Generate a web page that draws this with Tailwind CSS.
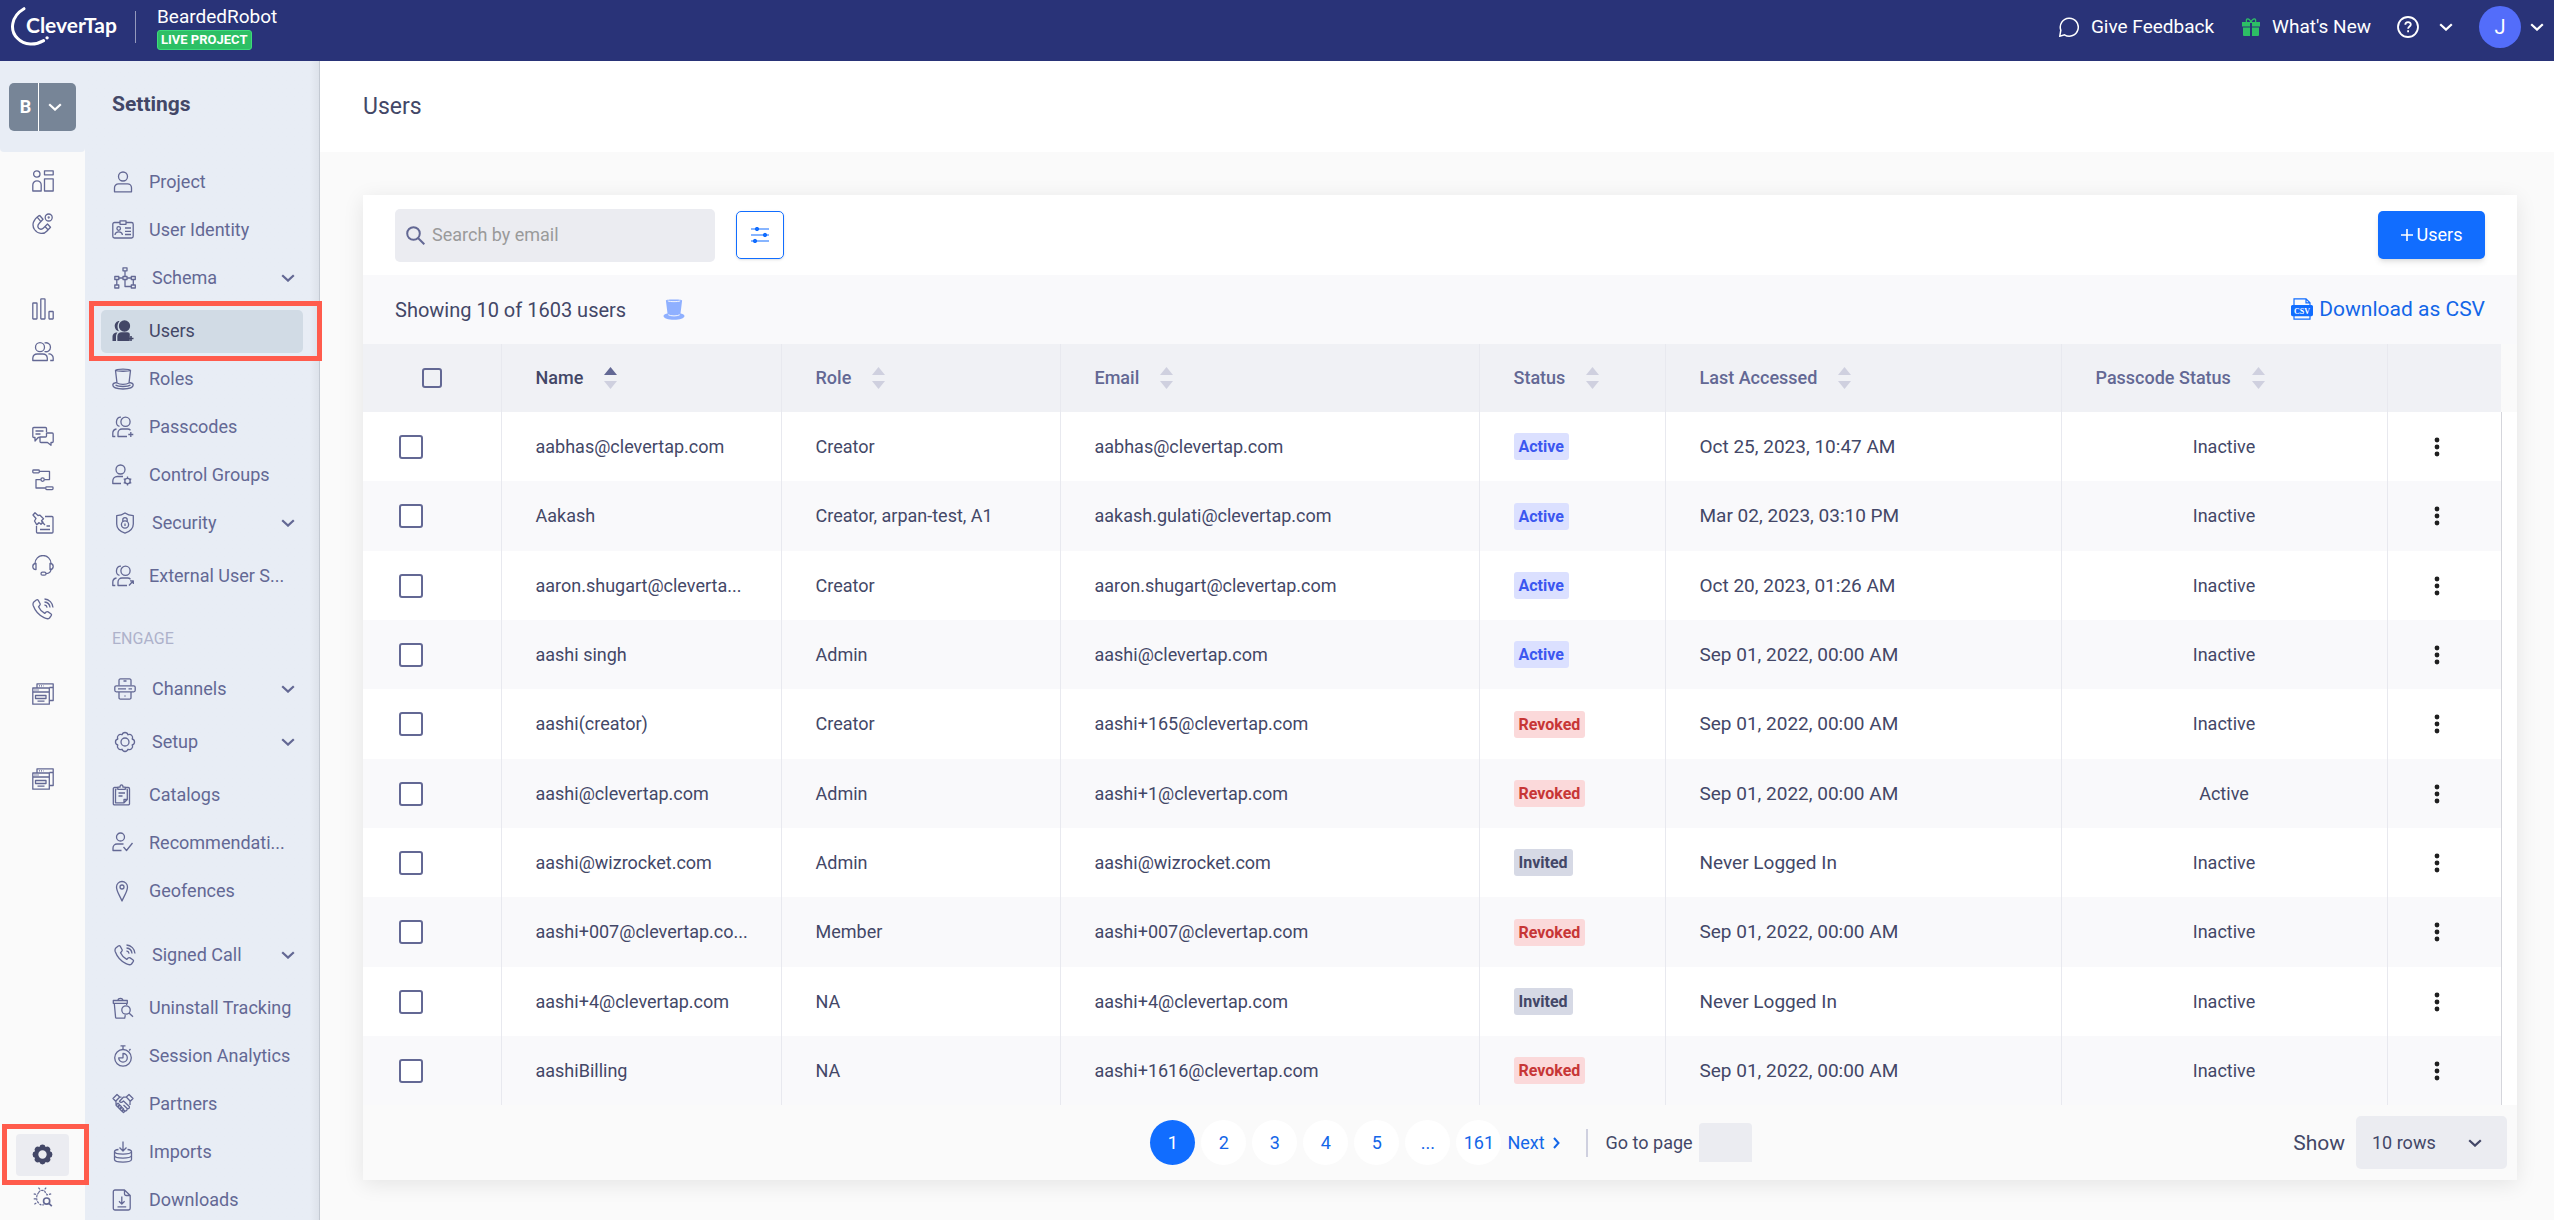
<!DOCTYPE html>
<html lang="en">
<head>
<meta charset="utf-8">
<meta name="viewport" content="width=device-width, initial-scale=1">
<title>Users - Settings</title>
<script src="https://cdn.jsdelivr.net/npm/@tailwindcss/browser@4"></script>
</head>
<body class="flex h-screen flex-col overflow-hidden bg-[#fafafa] font-['Roboto',sans-serif] text-lg leading-6 text-[#434767]">

<svg class="hidden" aria-hidden="true">
  <symbol id="dash" viewBox="0 0 22 22"><circle cx="4.8" cy="4" r="3.2"/><path d="M.8 21v-6a4.2 4.2 0 0 1 8.4 0v6z"/><rect x="12.5" y=".8" width="8.7" height="4"/><rect x="12.5" y="8.8" width="8.7" height="12.2"/></symbol>
  <symbol id="magnet" viewBox="0 0 22 22"><circle cx="16.7" cy="4.5" r="3.5"/><circle cx="16.7" cy="4.5" r=".5"/><path d="M7.5 2.2C1 6.500-.5 12 2.500 16.500 6 21.500 12 21.500 15 18l3.500-3.800-3-3.200-4 4c-1.500 1.500-3.500 1.700-4.800.3-1.300-1.500-1-3.300.6-5L11 6.200 7.500 2.200M5.200 4.200l3.300 4M13 13.500l3 3.200"/></symbol>
  <symbol id="bars" viewBox="0 0 22 22"><rect x=".8" y="5" width="4.200" height="16" rx=".5"/><rect x="8.800" y=".8" width="4.200" height="20.200" rx=".5"/><rect x="17" y="13.500" width="4.200" height="7.500" rx=".5"/></symbol>
  <symbol id="people" viewBox="0 0 22 22"><circle cx="8" cy="6.200" r="4.500"/><path d="M12.500 2a4.500 4.500 0 1 1 0 8.500M.8 19.500v-2.500a4.500 4.500 0 0 1 4.500-4h5.500a4.500 4.500 0 0 1 4.500 4v2.500zM16.500 13a4 4 0 0 1 4.700 4v2.500h-3"/></symbol>
  <symbol id="chat" viewBox="0 0 22 22"><path d="M14.500 6V2.500a1 1 0 0 0-1-1h-11.700a1 1 0 0 0-1 1v8a1 1 0 0 0 1 1H3v3.500l3.200-3.500H8M3.500 5h8M3.500 8h5"/><path d="M14.500 7h5.700a1 1 0 0 1 1 1v7.500a1 1 0 0 1-1 1H19v2.800l-3.500-2.800H9a1 1 0 0 1-1-1V11h5.500a1 1 0 0 0 1-1z"/></symbol>
  <symbol id="journey" viewBox="0 0 22 22"><rect x=".8" y="1" width="6.500" height="2.800" rx=".8"/><path d="M7.300 2.400H17.500v8.200h-5M8.800 10.600H4V19h9.500"/><circle cx="10.600" cy="10.600" r="1.700"/><rect x="13.800" y="17.800" width="7.200" height="2.800" rx=".8"/></symbol>
  <symbol id="pinnote" viewBox="0 0 22 22"><path d="M13 4.500h7a1 1 0 0 1 1 1V20a1 1 0 0 1-1 1H5.500a1 1 0 0 1-1-1v-6M8 17.500h10M14.500 14H18M1 3l2-2.200L6 3.500 8 3.200l3.500 3.600-2 2 1.500 1.500-2 2-1.700-1.500-2.500 2L2.500 9 4 6.500zM9.500 9.500l3.500 3.500M7 10.500l-2 2"/></symbol>
  <symbol id="headset" viewBox="0 0 22 22"><path d="M3 8.500a8 8 0 0 1 16 0M19 14c0 3-2 4.500-5 4.700"/><path d="M4 8.500v6c-2 0-3.200-1.200-3.200-3s1.200-3 3.200-3zM18 8.500v6c2 0 3.200-1.200 3.200-3s-1.200-3-3.200-3z"/><rect x="9" y="17.200" width="5" height="3" rx="1.500"/></symbol>
  <symbol id="phone" viewBox="0 0 22 22"><path d="M1.800 4l2.500-2c.8-.5 1.500-.4 2 .4L8 5.500c.4.800.3 1.400-.4 2L6.500 8.800c1.200 2.600 3.500 5.200 6.200 6.600l1.400-1.300c.6-.5 1.200-.6 2-.2l2.700 1.800c.8.600.9 1.300.4 2L17.500 20c-1 1-3 1-5.500-.3C7.500 17.500 3 12.500 1.300 7.800.7 6 .9 5 1.800 4zM12.500 1a9 9 0 0 1 8.500 8.500M12.500 4a6 6 0 0 1 5.500 5.500M12.500 7a3 3 0 0 1 2.600 2.600"/></symbol>
  <symbol id="windows" viewBox="0 0 22 22"><path d="M5 5V.8H21.200V17.500H17.500M.8 5h16.500v16.200H.8zM.8 9h16.500M17.500 4.500h3.500M3.500 12.500h10.500v3H3.500zM5.500 18.200h7"/><path stroke-dasharray="1 1" d="M2.500 7h4.500M7 2.900h4.500"/></symbol>
  <symbol id="gear" viewBox="0 0 22 22"><path fill-rule="evenodd" d="M18.200 8A3.100 3.100 0 0 1 18.200 14 3.100 3.100 0 0 1 14 18.200 3.100 3.100 0 0 1 8 18.200 3.100 3.100 0 0 1 3.800 14 3.100 3.100 0 0 1 3.800 8 3.100 3.100 0 0 1 8 3.800 3.100 3.100 0 0 1 14 3.800 3.100 3.100 0 0 1 18.200 8zM15 11a4 4 0 1 0-8 0 4 4 0 1 0 8 0z"/></symbol>
  <symbol id="bug" viewBox="0 0 22 22"><path stroke-dasharray="2.500 1" d="M6.500 6C3.500 9 3 14 6 17.500c2 2.300 4 2.500 6 2M6.500 6c0-3 7-3 7 0 1.500 1.200 2 2.500 2.300 4M6 .8l2.500 3M14.500.8l-2.500 3M.8 7.500l4 1M20 7.500l-4 1M.8 13h3M1.500 19l3-2"/><circle cx="15" cy="15.500" r="3.400" stroke-width="1.800"/><path stroke-width="1.800" d="M17.500 18l3.200 3"/></symbol>
  <symbol id="person" viewBox="0 0 22 22"><circle cx="11" cy="5.500" r="4.500"/><path d="M2.500 20.800v-4a4 4 0 0 1 4-4h9a4 4 0 0 1 4 4v4z"/></symbol>
  <symbol id="idcard" viewBox="0 0 22 22"><path d="M8 3.500H2.500a1.700 1.700 0 0 0-1.700 1.700v12.100A1.700 1.700 0 0 0 2.500 19h17a1.700 1.700 0 0 0 1.700-1.700V5.200a1.700 1.700 0 0 0-1.700-1.700H14M8 1.800h6v3.500H8zM3 16c.4-4.200 7-4.200 7.400 0M13 9h6M13 12.300h6M13 15.500h6"/><circle cx="6.700" cy="9.500" r="1.800"/></symbol>
  <symbol id="schema" viewBox="0 0 22 22"><rect x="9" y=".8" width="4" height="3"/><path d="M11 3.800v5.500M4.500 11H9M13 11h4.500M2.800 12.500V18M19.300 12.500V18M11 12.500V19.500h6"/><rect x=".8" y="9.500" width="4" height="3"/><rect x="9" y="9.500" width="4" height="3"/><rect x="17.300" y="9.500" width="4" height="3"/><rect x=".8" y="18" width="4" height="3"/><rect x="17.300" y="18" width="4" height="3"/></symbol>
  <symbol id="userssolid" viewBox="0 0 22 22"><g fill="currentColor"><circle cx="12.500" cy="6" r="5"/><path stroke="none" d="M7.500 1C5 .8 2.700 3 2.700 6s2 5 4.300 5.200C5 8 5 4 7.500 1zM5.500 12.500C2 12.500.5 14.500.5 17v4h3.500v-4c0-1.800.4-3.300 1.500-4.500z"/><path d="M6 20.400v-4.400a3.500 3.500 0 0 1 3.500-3h6c1 0 1.600.3 1.600 1v6.400z"/></g><path stroke-width="1.600" d="M19 16v5M16.500 18.500h5"/></symbol>
  <symbol id="usersplus" viewBox="0 0 22 22"><circle cx="13.500" cy="5.800" r="4.600"/><path d="M9 1.200C3.500 1 3 9.500 7.500 10.300M4.500 13C2 13.500.8 15 .8 17v3.500h2.500M15 20.500H6V17a4 4 0 0 1 4-4h5.500a4 4 0 0 1 3 1.200M18.800 16v5M16.300 18.500h5"/></symbol>
  <symbol id="usersout" viewBox="0 0 22 22"><circle cx="13.500" cy="5.800" r="4.600"/><path d="M9 1.200C3.500 1 3 9.500 7.500 10.300M4.500 13C2 13.500.8 15 .8 17v3.500h2.500M15 20.500H6V17a4 4 0 0 1 4-4h5.500a4 4 0 0 1 3 1.200M17 20.500l4-4.500M18 15.800h3.300V19"/></symbol>
  <symbol id="usergear" viewBox="0 0 22 22"><circle cx="8.500" cy="5.500" r="4.500"/><path d="M9 19.500H.8V17a4.500 4.500 0 0 1 4.500-4.500H11"/><circle cx="15.500" cy="17" r="2.700"/><path d="M15.500 12.500v1.800M15.500 19.700v1.800M11.700 14.800l1.500.8M17.800 18.400l1.500.8M11.700 19.200l1.500-.8M17.800 15.600l1.500-.8"/></symbol>
  <symbol id="hat" viewBox="0 0 22 22"><path d="M3.500 2.500c2 1 13 1 15 0M3.500 2.500C4 .7 18 .7 18.500 2.500L17 15c-3 1.700-9 1.700-12 0zM4.800 14.500c-2.500.3-4 1.100-4 2.500 0 2.200 4 4 10.200 4s10.200-1.800 10.200-4c0-1.400-1.500-2.200-4-2.500M3.500 17c3 2 12 2 15 0"/></symbol>
  <symbol id="shield" viewBox="0 0 22 22"><path d="M11 1c2.500 1.800 5 2.500 8.300 2.700V12c0 4.300-3.500 7.500-8.300 9.200C6.200 19.500 2.700 16.300 2.700 12V3.700C6 3.500 8.500 2.800 11 1z"/><circle cx="11" cy="12.500" r="3.600"/><path d="M8.800 9.500V7.800a2.200 2.200 0 0 1 4.400 0v1.700M11 11.500v2.500"/></symbol>
  <symbol id="channels" viewBox="0 0 22 22"><path d="M5 7.500V2.500A1.500 1.500 0 0 1 6.500.8h9A1.500 1.500 0 0 1 17 2.500v5M5 14v5.500a1.500 1.500 0 0 0 1.500 1.700h9a1.500 1.500 0 0 0 1.500-1.700V14"/><rect x=".8" y="7.800" width="20.400" height="6" rx="1.500"/><path d="M4 10.800h8M14.500 10.800H18M9.500 3h3M10.500 18h1"/></symbol>
  <symbol id="clipboard" viewBox="0 0 22 22"><path d="M6 3.500H2.500A1.200 1.200 0 0 0 1.300 4.700v15a1.200 1.200 0 0 0 1.200 1.200h13.800a1.200 1.200 0 0 0 1.200-1.200v-15a1.200 1.200 0 0 0-1.200-1.200H13M5.800 5.300V3.200H8c0-3 3-3 3 0h2.300v2.100zM4.500 5.500H3.500v13.300h8.500l3.300-3.300v-10H14.500M12 18.800v-3.300h3.300M6.500 9h6.500M6.500 12h4"/></symbol>
  <symbol id="usercheck" viewBox="0 0 22 22"><circle cx="8.500" cy="5" r="4"/><path d="M9.500 18.500H1v-2.500a4 4 0 0 1 4-4h6.500M11.500 15l3 3.500 6-7.500"/></symbol>
  <symbol id="pin" viewBox="0 0 22 22"><path d="M10 21C8 16 4.500 11.500 4.500 7a5.500 5.500 0 0 1 11 0C15.500 11.500 12 16 10 21z"/><circle cx="10" cy="7" r="2"/></symbol>
  <symbol id="trash" viewBox="0 0 22 22"><path d="M1.300 3.500h14v2.800h-14zM6 3.300C6 .8 10.800.8 10.800 3.300M2.300 6.500l1.300 14a.8.800 0 0 0 .8.700h8.300l.6-3M14.700 6.500l-.1 1.500"/><circle cx="14" cy="13" r="4.200"/><path d="M17 16l4 3.800"/></symbol>
  <symbol id="timer" viewBox="0 0 22 22"><circle cx="11" cy="12.800" r="8.300"/><path d="M11 4.200V.8M8.500.8h5M17.200 5.500l1.300-1.500M11 8.500v4.300H6.700a4.300 4.300 0 1 0 4.300-4.300z"/></symbol>
  <symbol id="handshake" viewBox="0 0 22 22"><path d="M1 5.500l4-4 2.700 2.500-4 4.200zM21 5.500l-4-4-2.700 2.500 4 4.200zM7.500 4.200h2M14.300 4.200h-3L7.500 8.300c1 1.500 2.500 1.200 4-.3l5.800 5.500c.5 1.500-.5 2.500-2 2M4 8.200v3.300M18 8v4M4 12l2-1.700 1.500 1.500-2 2zM6 14l2-1.800 1.500 1.600-2 2zM8 16.200l2-1.800 1.500 1.500-2 2zM10 18.200l1.500-1.400 1.500 1.500-1.500 1.300zM15 15.500c.5 1.500-.5 2.500-2 2.500M11.500 12l3.700 3.500"/></symbol>
  <symbol id="imports" viewBox="0 0 22 22"><path d="M11 .5v9M7.500 6.500L11 10l3.500-3.500M6.500 8.500c-2.500.3-4 1-4 2 0 3.500 17 3.500 17 0 0-1-1.500-1.700-4-2M2.500 10.500v8c0 3.500 17 3.500 17 0v-8M2.500 14.500c0 3.500 17 3.500 17 0"/></symbol>
  <symbol id="download" viewBox="0 0 22 22"><path d="M12.500 1H3A1.700 1.700 0 0 0 1.300 2.700v16.600A1.700 1.700 0 0 0 3 21h13.500a1.700 1.700 0 0 0 1.700-1.700V6.500zM12.500 1v3.800a1.700 1.700 0 0 0 1.700 1.700h4M9.800 7.500V15M7 12.300l2.800 2.800 2.800-2.800M5.500 17.800h8.700"/></symbol>
  <symbol id="chev" viewBox="0 0 14 8"><path stroke-width="2.200" d="M1.200 1.200L7 6.600l5.800-5.400"/></symbol>
  <symbol id="dots" viewBox="0 0 6 20"><g fill="#1f1f1f" stroke="none"><circle cx="3" cy="3" r="2.400"/><circle cx="3" cy="10" r="2.400"/><circle cx="3" cy="17" r="2.400"/></g></symbol>
</svg>

<header class="flex h-[61px] shrink-0 items-center bg-[#293378] pb-2 text-[19px] text-white">
  <a href="#" aria-label="CleverTap home" class="relative ml-[11px] flex h-[46px] w-[124px] items-center">
    <svg class="absolute top-[3px] left-0 h-[43px] w-[40px]" viewBox="0 0 42 46" fill="none" stroke="#fff" stroke-linecap="round"><path stroke-width="3.200" d="M13.500 1.800C-.5 10-2 25 6.500 33.500 14 41.500 26 41 34.500 36"/><circle cx="38.200" cy="33" r="1.800" fill="#fff" stroke="none"/></svg>
    <span class="pb-1 pl-[15px] font-['Lato',sans-serif] text-[21px] font-bold">CleverTap</span>
  </a>
  <span class="h-8 w-px bg-white/50"></span>
  <div class="ml-[21px] flex flex-col items-start">
    <span class="leading-[26px]">BeardedRobot</span>
    <span class="rounded-[3px] border border-[#3ddc7b] bg-[#2dbf65] px-[3px] text-[13px] leading-[18px] font-bold">LIVE PROJECT</span>
  </div>
  <nav class="mr-[10px] ml-auto flex items-center" aria-label="Account">
    <a href="#" class="flex items-center gap-3"><svg class="size-5" viewBox="0 0 20 20" fill="none" stroke="#fff" stroke-width="1.500"><path d="M.8 19.200l1-6A9 9 0 1 1 5.500 17.800z"/></svg>Give Feedback</a>
    <a href="#" class="ml-7 flex items-center gap-3"><svg class="size-[18px]" viewBox="0 0 18 18" fill="#2dbf65"><path d="M0 4h18v4.500H0zM1 9.500h7V18H2a1 1 0 0 1-1-1zM10 9.500h7V17a1 1 0 0 1-1 1h-6z"/><path fill="none" stroke="#2dbf65" stroke-width="1.300" d="M9 4C7-.5 3.500 0 4.500 4M9 4c2-4.500 5.500-4 4.500 0"/><path fill="#293378" d="M8 5h2v11H8z"/></svg>What's New</a>
    <button aria-label="Help" class="ml-[26px] flex items-center gap-[20px]"><svg class="size-[22px]" viewBox="0 0 22 22" fill="none" stroke="#fff" stroke-width="1.800"><circle cx="11" cy="11" r="10"/><path d="M8.300 8.800c0-3.600 5.500-3.500 5.500-.3 0 2-2.700 2-2.700 4.200M11.100 14.300v2"/></svg><svg class="h-2 w-[14px]" fill="none" stroke="currentColor"><use href="#chev"/></svg></button>
    <button aria-label="Profile menu" class="ml-[26px] flex items-center gap-[9px]"><span class="flex size-[42px] items-center justify-center rounded-full bg-[#536dfa] text-xl">J</span><svg class="h-2 w-[14px]" fill="none" stroke="currentColor"><use href="#chev"/></svg></button>
  </nav>
</header>

<div class="flex min-h-0 flex-1">
  <nav id="rail" class="flex w-[85px] shrink-0 flex-col items-center text-[#636894]" aria-label="Sections">
    <div class="flex h-[91px] w-full shrink-0 items-center rounded-b bg-[#e8edf5] pl-[9px]">
      <button class="flex h-12 w-[67px] items-center rounded-[5px] bg-[#778597] text-white" aria-label="Switch project"><span class="flex h-full w-[30px] items-center justify-center border-r border-white pl-1 text-lg font-bold">B</span><svg class="ml-[9px] h-2 w-[14px]" fill="none" stroke="currentColor"><use href="#chev"/></svg></button>
    </div>
  </nav>

  <aside class="w-[235px] shrink-0 border-r border-[#c3c9d2] bg-linear-to-l from-[#dde2ea] via-[#e8edf5] via-4% to-[#e8edf5] text-[#636894]">
    <h2 class="flex h-[97px] items-center px-[27px] pb-3 text-[21px] font-bold text-[#434767]">Settings</h2>
    <ul id="menu"></ul>
  </aside>

  <main class="min-w-0 flex-1">
    <h1 class="flex h-[91px] items-center bg-white px-[43px] text-[23px]">Users</h1>
    <section class="mt-[43px] mr-[37px] ml-[43px] bg-white shadow-[0_4px_20px_rgba(0,0,0,0.09)]">
      <div class="flex h-20 items-center px-8">
        <label class="flex h-[53px] w-[320px] items-center gap-[7px] rounded-[5px] bg-[#ebecf1] px-[11px]">
          <svg class="size-[19px] text-[#636894]" viewBox="0 0 19 19" fill="none" stroke="currentColor" stroke-width="2"><circle cx="7.500" cy="7.500" r="6.300"/><path d="M12 12l6.300 6.300"/></svg>
          <input type="search" aria-label="Search by email" placeholder="Search by email" class="min-w-0 flex-1 bg-transparent outline-none placeholder:text-[#9a9a9a]">
        </label>
        <button aria-label="Filters" class="ml-[21px] flex size-12 items-center justify-center rounded-[5px] border border-[#116dff] shadow-sm"><svg class="h-4 w-[18px]" viewBox="0 0 18 16" fill="#116dff" stroke="#116dff"><path stroke-width="1.200" d="M0 2h18M0 8h18M0 14h18"/><circle cx="6" cy="2" r="1.700"/><circle cx="14" cy="8" r="1.700"/><circle cx="4" cy="14" r="1.700"/></svg></button>
        <button class="ml-auto flex h-12 w-[107px] items-center justify-center gap-1 rounded-[5px] bg-[#116dff] text-white shadow-md"><svg class="size-3" viewBox="0 0 12 12" stroke="#fff" stroke-width="1.600"><path d="M6 0v12M0 6h12"/></svg>Users</button>
      </div>
      <div class="flex h-[69px] items-center bg-[#f9f9fb] px-8 text-xl">
        <p>Showing 10 of 1603 users</p>
        <button aria-label="Filter by role" class="ml-[37px]"><svg class="h-[21px] w-[22px]" viewBox="0 0 22 22" fill="#8fb0ff"><path d="M2.500 1.500C3 .3 19 .3 19.500 1.500l-1.700 13.700c1.500.4 4.200 1 4.200 2.500 0 2.500-5 4-11 4s-11-1.500-11-4c0-1.500 2.700-2.100 4.200-2.500z"/><path d="M4.500 2c2 1 11 1 13 0M5 16.500c2.500 1.600 9.500 1.600 12 0" fill="none" stroke="#f9f9fb"/></svg></button>
        <a href="#" class="ml-auto flex items-center gap-[6px] text-[21px] text-[#1366e8]"><svg class="size-[22px]" viewBox="0 0 22 22" fill="none" stroke="#116dff" stroke-width="1.200"><path d="M3 7V.8h12l4 4V7M15 .8v4h4M3 18v3.200h16V18"/><rect x=".6" y="7.600" width="20.800" height="10" rx="1" fill="#116dff"/><text x="11" y="15.500" text-anchor="middle" font-size="8" font-weight="700" font-family="Liberation Serif, serif" fill="#fff" stroke="none">CSV</text></svg>Download as CSV</a>
      </div>
      <div class="bg-linear-to-b from-[#fafafa] from-[68px] to-white to-[68px] pr-4">
      <table class="w-full table-fixed border-collapse text-left">
        <colgroup><col class="w-[138px]"><col class="w-[280px]"><col class="w-[279px]"><col class="w-[419px]"><col class="w-[186px]"><col class="w-[396px]"><col class="w-[326px]"><col class="w-[114px]"></colgroup>
        <thead class="bg-[#f0f1f5] text-[#636894]"><tr id="head" class="h-[68px]"></tr></thead>
        <tbody id="rows"></tbody>
      </table>
      </div>
      <footer class="flex h-[75px] items-center bg-[#fafafa]">
        <div class="flex-1"></div>
        <nav id="pages" class="ml-8 flex items-center gap-[6px] text-[#1366e8]" aria-label="Pagination"></nav>
        <div class="flex flex-1 items-center justify-end pr-[10px]">
          <label for="rowcount" class="mr-[11px] text-[21px]">Show</label>
          <span class="relative flex items-center">
            <select id="rowcount" class="h-[53px] w-[151px] appearance-none rounded-[5px] bg-[#ebecf1] pl-4"><option>10 rows</option></select>
            <svg class="pointer-events-none absolute right-[25px] h-2 w-[14px]" fill="none" stroke="currentColor"><use href="#chev"/></svg>
          </span>
        </div>
      </footer>
    </section>
  </main>
</div>

<script>
const byId = id => document.getElementById(id);
const icon = (name, cls = 'size-[22px]') => `<svg class="${cls} shrink-0" fill="none" stroke="currentColor" stroke-width="1.3" stroke-linejoin="round"><use href="#${name}"/></svg>`;
const chev = '<svg class="ml-auto h-2 w-[14px] shrink-0" fill="none" stroke="currentColor"><use href="#chev"/></svg>';

const rail = [
  ['Dashboards', 'dash', 'mt-[7px]'], ['Acquire', 'magnet', ''], ['Analytics', 'bars', 'mt-[42px]'], ['Segments', 'people', ''],
  ['Campaigns', 'chat', 'mt-[42px]'], ['Journeys', 'journey', ''], ['Notes', 'pinnote', ''], ['Support', 'headset', ''],
  ['Signed Call', 'phone', ''], ['Content', 'windows', 'mt-[42px]'], ['Templates', 'windows', 'mt-[42px]']
];
byId('rail').insertAdjacentHTML('beforeend', rail.map(([label, name, gap]) =>
  `<a href="#" aria-label="${label}" class="flex h-[43px] w-full shrink-0 items-center justify-center ${gap}">${icon(name)}</a>`).join('') +
  `<a href="#" aria-label="Settings" class="z-10 mt-auto mr-auto ml-[2px] flex h-[61px] w-[87px] shrink-0 items-center border-[5px] border-[#ff5b4c] pl-[9px]"><span class="flex h-[42px] w-[53px] items-center justify-center rounded bg-[#ebecf1] text-[#434767]"><svg class="size-[23px]" fill="currentColor"><use href="#gear"/></svg></span></a>
   <a href="#" aria-label="Debug" class="mb-3 flex h-[23px] shrink-0 items-center">${icon('bug', 'size-5')}</a>`);

const menu = [
  ['Project', 'person'], ['User Identity', 'idcard'], ['Schema', 'schema', 1], ['Users', 'userssolid', 2], ['Roles', 'hat'],
  ['Passcodes', 'usersplus'], ['Control Groups', 'usergear'], ['Security', 'shield', 1], ['External User S...', 'usersout'],
  ['ENGAGE'], ['Channels', 'channels', 1], ['Setup', 'gear', 1], ['Catalogs', 'clipboard'], ['Recommendati...', 'usercheck'],
  ['Geofences', 'pin'], ['Signed Call', 'phone', 3], ['Uninstall Tracking', 'trash'], ['Session Analytics', 'timer'],
  ['Partners', 'handshake'], ['Imports', 'imports'], ['Downloads', 'download']
];
byId('menu').innerHTML = menu.map(([label, name, kind]) => {
  if (!name) return `<li class="mt-[13px] flex h-[52px] items-center px-[27px] text-base text-[#aeb2cb]">${label}</li>`;
  if (kind === 2) return `<li class="relative flex h-12 items-center px-4"><span class="pointer-events-none absolute -inset-y-[6px] -right-[3px] left-[4px] z-10 border-[5px] border-[#ff5b4c]"></span><a href="#" aria-current="page" class="flex h-[43px] w-[203px] items-center gap-[15px] rounded-[5px] bg-[#d1dbe5] pl-[11px] text-[#434767]">${icon(name)}${label}</a></li>`;
  if (kind) return `<li class="mb-[5px] ${kind === 3 ? 'mt-4' : 'mt-0'}"><button class="flex h-12 w-full items-center gap-[16px] pr-[24px] pl-[29px]">${icon(name)}${label}${chev}</button></li>`;
  return `<li><a href="#" class="flex h-12 items-center gap-[15px] pl-[27px] whitespace-nowrap">${icon(name)}${label}</a></li>`;
}).join('');

const check = (label, cls) => `<input type="checkbox" aria-label="${label}" class="${cls} block appearance-none rounded-[3px] border-2 border-[#636894]">`;
byId('head').innerHTML = `<th>${check('Select all users', 'size-5 mx-auto bg-transparent')}</th>` +
  ['Name', 'Role', 'Email', 'Status', 'Last Accessed', 'Passcode Status'].map((h, i) =>
    `<th class="border-l border-[#e8e9ef] pl-[34px] font-medium ${i ? '' : 'text-[#434767]'}"><button class="flex items-center gap-[21px]">${h}<svg class="h-[22px] w-[13px]" viewBox="0 0 13 22" fill="#cfd0df"><path ${i ? '' : 'fill="#636894"'} d="M6.500 0L13 8H0z"/><path d="M6.500 22L13 14H0z"/></svg></button></th>`).join('') +
  '<th class="border-l border-[#e8e9ef]"></th>';

const badge = {
  Active: 'bg-[#dbe0ff] text-[#3b57f0]',
  Revoked: 'bg-[#fbd9da] text-[#c73636]',
  Invited: 'bg-[#d6d9e5] text-[#434767]'
};
const users = [
  ['aabhas@clevertap.com', 'Creator', 'aabhas@clevertap.com', 'Active', 'Oct 25, 2023, 10:47 AM', 'Inactive'],
  ['Aakash', 'Creator, arpan-test, A1', 'aakash.gulati@clevertap.com', 'Active', 'Mar 02, 2023, 03:10 PM', 'Inactive'],
  ['aaron.shugart@cleverta...', 'Creator', 'aaron.shugart@clevertap.com', 'Active', 'Oct 20, 2023, 01:26 AM', 'Inactive'],
  ['aashi singh', 'Admin', 'aashi@clevertap.com', 'Active', 'Sep 01, 2022, 00:00 AM', 'Inactive'],
  ['aashi(creator)', 'Creator', 'aashi+165@clevertap.com', 'Revoked', 'Sep 01, 2022, 00:00 AM', 'Inactive'],
  ['aashi@clevertap.com', 'Admin', 'aashi+1@clevertap.com', 'Revoked', 'Sep 01, 2022, 00:00 AM', 'Active'],
  ['aashi@wizrocket.com', 'Admin', 'aashi@wizrocket.com', 'Invited', 'Never Logged In', 'Inactive'],
  ['aashi+007@clevertap.co...', 'Member', 'aashi+007@clevertap.com', 'Revoked', 'Sep 01, 2022, 00:00 AM', 'Inactive'],
  ['aashi+4@clevertap.com', 'NA', 'aashi+4@clevertap.com', 'Invited', 'Never Logged In', 'Inactive'],
  ['aashiBilling', 'NA', 'aashi+1616@clevertap.com', 'Revoked', 'Sep 01, 2022, 00:00 AM', 'Inactive']
];
const td = (html, cls = 'pl-[34px]') => `<td class="border-l border-[#e8e9ef] ${cls}">${html}</td>`;
byId('rows').innerHTML = users.map(([name, role, email, status, seen, pass]) =>
  `<tr class="h-[69px] bg-white even:bg-[#f9f9fb] nth-[3n+2]:h-[70px]"><td class="pl-9">${check('Select ' + name, 'size-6 bg-white')}</td>` +
  td(name, 'pl-[34px] whitespace-nowrap') + td(role) + td(email) +
  td(`<span class="inline-block rounded-[3px] px-[5px] text-base leading-[27px] font-bold ${badge[status]}">${status}</span>`) +
  td(seen, 'pl-[34px] text-[19px]') + td(pass, 'text-center') +
  td(`<button aria-label="Actions for ${name}" class="block">${icon('dots', 'h-5 w-[6px]')}</button>`, 'border-r border-r-[#d5d6dc] pl-[46px]') + '</tr>').join('');

byId('pages').innerHTML = ['1', '2', '3', '4', '5', '...', '161'].map((p, i) =>
  `<button class="flex size-[45px] items-center justify-center rounded-full ${i ? 'bg-white' : 'bg-[#116dff] text-white'}">${p}</button>`).join('') +
  `<button class="flex items-center gap-2">Next<svg class="h-3 w-[7px]" viewBox="0 0 7 12" fill="none" stroke="currentColor" stroke-width="2"><path d="M1 1l4.500 5L1 11"/></svg></button>
   <span class="mr-3 ml-5 h-7 w-[2px] bg-[#cfd0df]"></span>
   <label class="flex items-center gap-[6px] text-[#434767]">Go to page<input type="text" class="h-[39px] w-[53px] rounded-t bg-[#ebecf1] px-2 outline-none"></label>`;
</script>
</body>
</html>
